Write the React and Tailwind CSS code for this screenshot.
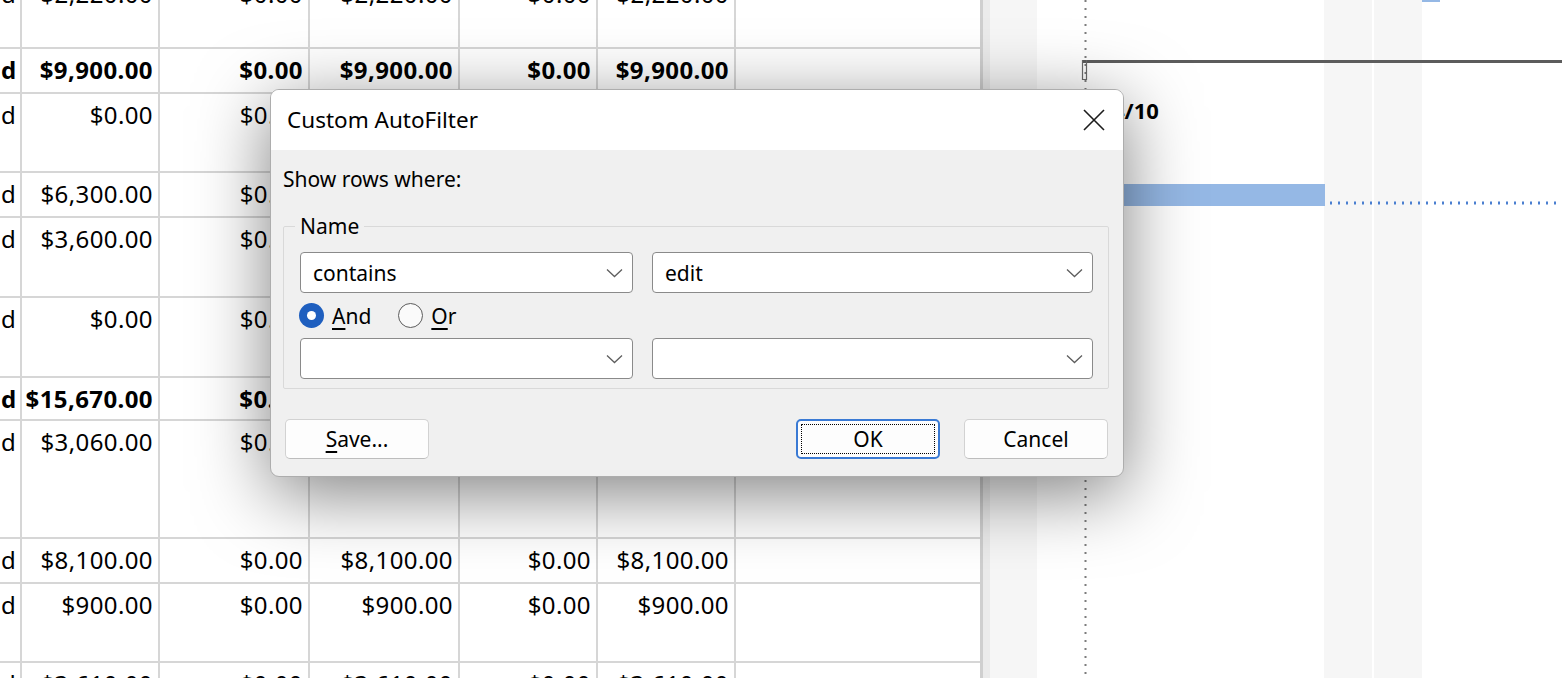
import React from "react";

const rows = [
  { h: "h-[76px]", v: "$2,220.00" },
  { h: "h-[45px]", v: "$9,900.00", b: true },
  { h: "h-[79px]", v: "$0.00" },
  { h: "h-[45px]", v: "$6,300.00" },
  { h: "h-[80px]", v: "$3,600.00" },
  { h: "h-[80px]", v: "$0.00" },
  { h: "h-[43px]", v: "$15,670.00", b: true },
  { h: "h-[118px]", v: "$3,060.00" },
  { h: "h-[45px]", v: "$8,100.00" },
  { h: "h-[79px]", v: "$900.00" },
  { h: "h-[79px]", v: "$3,610.00" },
];

function Row({ r }) {
  const cell = "shrink-0 border-r-2 border-[#d6d6d6] text-right pr-[5px] pt-[3px] leading-[36px] whitespace-nowrap overflow-hidden";
  return (
    <div className={`flex border-b-2 border-[#d6d6d6] ${r.h} ${r.b ? "font-bold" : ""}`}>
      <div className="w-[22px] shrink-0 border-r-2 border-[#d6d6d6] pl-[1px] pt-[3px] leading-[36px] overflow-hidden">d</div>
      <div className={`w-[138px] ${cell}`}>{r.v}</div>
      <div className={`w-[150px] ${cell}`}>$0.00</div>
      <div className={`w-[150px] ${cell}`}>{r.v}</div>
      <div className={`w-[138px] ${cell}`}>$0.00</div>
      <div className={`w-[138px] ${cell}`}>{r.v}</div>
      <div className="w-[244px] shrink-0" />
    </div>
  );
}

function Chevron() {
  return (
    <svg width="17" height="10" viewBox="0 0 17 10" className="shrink-0">
      <path d="M1 1.5 L8.5 8.5 L16 1.5" fill="none" stroke="#5e5e5e" strokeWidth="1.3" />
    </svg>
  );
}

function Combo({ text, className }) {
  return (
    <div className={`h-[41px] bg-white border-[1.5px] border-[#8a8a8a] rounded-[4px] flex items-center justify-between pl-[12px] pr-[9px] ${className}`}>
      <span className="leading-[30px]">{text}</span>
      <Chevron />
    </div>
  );
}

export default function App() {
  return (
    <div className="relative w-[1562px] h-[678px] overflow-hidden bg-white flex font-['Noto_Sans',sans-serif] text-black">
      {/* table */}
      <div className="w-[980px] shrink-0 h-[678px] overflow-hidden text-[24px] tracking-[0.4px]">
        <div className="-mt-[27px]">
          {rows.map((r, i) => (
            <Row key={i} r={r} />
          ))}
        </div>
      </div>
      {/* splitter */}
      <div className="w-[10px] shrink-0 h-[678px] border-l-[3px] border-[#cfcfcf] bg-[#ebebeb]" />
      {/* gantt chart canvas */}
      <div className="relative flex-1 h-[678px] overflow-hidden bg-white">
        <div className="absolute left-0 top-0 w-[47px] h-full bg-[#f6f6f6]" />
        <div className="absolute left-[334px] top-0 w-[48px] h-full bg-[#f6f6f6]" />
        <div className="absolute left-[384px] top-0 w-[48px] h-full bg-[#f6f6f6]" />
        <svg className="absolute left-[94px] top-0" width="3" height="678">
          <line x1="1.5" y1="0" x2="1.5" y2="678" stroke="#7d7d7d" strokeWidth="2" strokeDasharray="2 6" />
        </svg>
        <div className="absolute left-[93px] right-0 top-[60px] h-[3px] bg-[#5c5c5c]" />
        <svg className="absolute left-[91px] top-[60px]" width="8" height="21">
          <path d="M1.5 0 V19.5 H5.5 V0" fill="none" stroke="#6a6a6a" strokeWidth="1.2" />
        </svg>
        <div className="absolute left-[122px] top-[94px] text-[22px] leading-[32px] font-bold">4/10</div>
        <div className="absolute left-[100px] top-[184px] w-[235px] h-[22px] bg-[#95b8e5]" />
        <svg className="absolute left-[340px] top-[201px]" width="232" height="4">
          <line x1="0" y1="2" x2="232" y2="2" stroke="#4a7fd0" strokeWidth="3" strokeDasharray="2 6" />
        </svg>
        <div className="absolute left-[432px] top-0 w-[18px] h-[2px] bg-[#95b8e5]" />
      </div>

      {/* dialog */}
      <div className="absolute left-[270px] top-[89px] w-[854px] rounded-[9px] border border-[#adadad] bg-[#f0f0f0] shadow-[0_16px_72px_rgba(0,0,0,0.5)] flex flex-col overflow-hidden text-[21px]">
        <div className="h-[60px] bg-white flex items-center justify-between pl-[16px] pr-[18px]">
          <span className="text-[22.5px] leading-[30px]">Custom AutoFilter</span>
          <svg width="22" height="22" viewBox="0 0 22 22">
            <path d="M1 1 L21 21 M21 1 L1 21" stroke="#1c1c1c" strokeWidth="1.6" />
          </svg>
        </div>
        <div className="flex flex-col px-[12px] pb-[17px]">
          <div className="pt-[14px] leading-[30px]">Show rows where:</div>
          <fieldset className="mt-[17px] mr-[2px] border border-[#d9d9d9] rounded-[2px] pb-[9px]">
            <legend className="ml-[11px] px-[5px] leading-[30px]">Name</legend>
            <div className="pl-[16px] pr-[15px] mt-[11px] flex flex-col">
              <div className="flex gap-[19px]">
                <Combo text="contains" className="w-[333px]" />
                <Combo text="edit" className="flex-1" />
              </div>
              <div className="h-[45px] flex items-center -ml-[1px]">
                <div className="w-[25px] h-[25px] rounded-full bg-[#1f5fbf] flex items-center justify-center">
                  <div className="w-[9px] h-[9px] rounded-full bg-white" />
                </div>
                <span className="ml-[8px] inline-block leading-[30px] first-letter:underline first-letter:underline-offset-[4px] first-letter:decoration-[1.5px]">And</span>
                <div className="ml-[27px] w-[25px] h-[25px] rounded-full border-[1.5px] border-[#5c5c5c] bg-[#fafafa]" />
                <span className="ml-[8px] inline-block leading-[30px] first-letter:underline first-letter:underline-offset-[4px] first-letter:decoration-[1.5px]">Or</span>
              </div>
              <div className="flex gap-[19px]">
                <Combo text="" className="w-[333px]" />
                <Combo text="" className="flex-1" />
              </div>
            </div>
          </fieldset>
          <div className="mt-[30px] flex items-center h-[40px]">
            <div className="ml-[2px] w-[144px] h-[40px] rounded-[5px] bg-[#fdfdfd] border border-[#d2d2d2] border-b-[#bdbdbd] flex items-center justify-center leading-[30px]">
              <span className="inline-block first-letter:underline first-letter:underline-offset-[4px] first-letter:decoration-[1.5px]">Save...</span>
            </div>
            <div className="flex-1" />
            <div className="relative w-[144px] h-[40px] rounded-[5px] bg-[#fdfdfd] border-2 border-[#3a7ad4] flex items-center justify-center leading-[30px]">
              <span className="absolute inset-[3px] border border-dotted border-black rounded-[1px]" />
              OK
            </div>
            <div className="ml-[24px] mr-[3px] w-[144px] h-[40px] rounded-[5px] bg-[#fdfdfd] border border-[#d2d2d2] border-b-[#bdbdbd] flex items-center justify-center leading-[30px]">
              Cancel
            </div>
          </div>
        </div>
      </div>
    </div>
  );
}
